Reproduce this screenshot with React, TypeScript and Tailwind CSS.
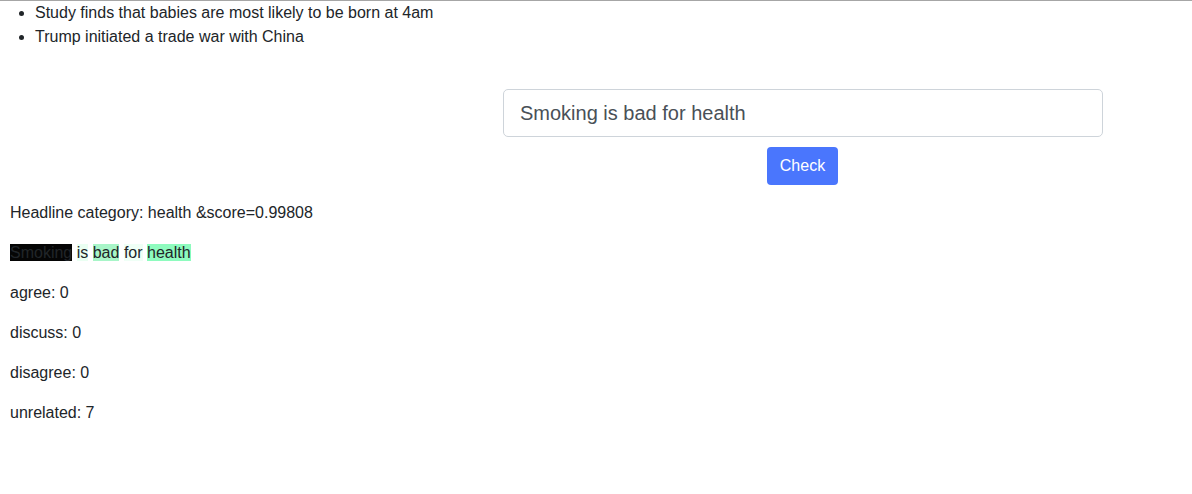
const headlines = [
    "Study finds that babies are most likely to be born at 4am",
    "Trump initiated a trade war with China",
];

const words = [
    { text: "Smoking", bg: "bg-[#050505]" },
    { text: "is", bg: "bg-[#eafff2]" },
    { text: "bad", bg: "bg-[#a8f5c8]" },
    { text: "for", bg: "bg-[#effff6]" },
    { text: "health", bg: "bg-[#8efbbe]" },
];

const stances = [
    { label: "agree", count: 0 },
    { label: "discuss", count: 0 },
    { label: "disagree", count: 0 },
    { label: "unrelated", count: 7 },
];

export default function App() {
    return (
        <div className="min-h-[494px] bg-white border-t border-[#a6a6a6] font-['Liberation_Sans',Arial,sans-serif] text-base leading-6 text-[#212529]">
            <ul className="list-disc pl-[35px]">
                {headlines.map((h) => (
                    <li key={h}>{h}</li>
                ))}
            </ul>

            <div className="mt-10 pl-[503px]">
                <div className="flex w-[600px] flex-col items-center">
                    <input
                        type="text"
                        defaultValue="Smoking is bad for health"
                        className="h-12 w-full rounded-[5px] border border-[#ced4da] px-4 text-xl text-[#495057] outline-none"
                    />
                    <button className="mt-2.5 mr-px h-[38px] w-[71px] rounded-[4px] bg-[#4a76fd] text-base text-white">
                        Check
                    </button>
                </div>
            </div>

            <div className="mt-4 px-[10px]">
                <p className="mb-4">Headline category: health &amp;score=0.99808</p>
                <p className="mb-4">
                    {words.map((w, i) => (
                        <span key={w.text}>
                            <span className={w.bg}>{w.text}</span>
                            {i < words.length - 1 ? " " : ""}
                        </span>
                    ))}
                </p>
                {stances.map((s) => (
                    <p key={s.label} className="mb-4">
                        {s.label}: {s.count}
                    </p>
                ))}
            </div>
        </div>
    );
}
